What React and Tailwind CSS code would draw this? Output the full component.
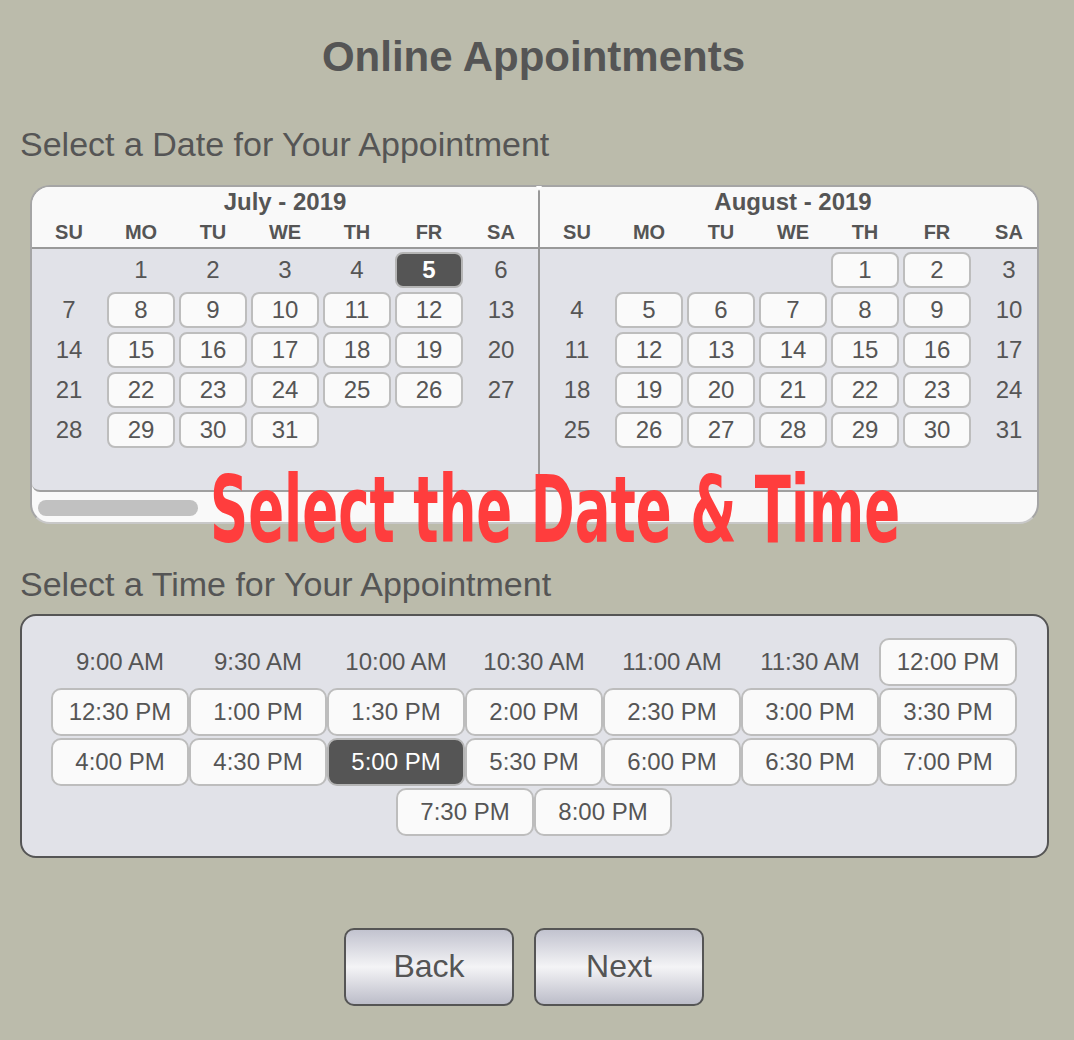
const font = { fontFamily: '"Liberation Sans", Arial, sans-serif' };

const weekDays = ["SU", "MO", "TU", "WE", "TH", "FR", "SA"];

const months = [
  { title: "July - 2019", offset: 1, days: 31, open: [8, 9, 10, 11, 12, 15, 16, 17, 18, 19, 22, 23, 24, 25, 26, 29, 30, 31], selected: 5 },
  { title: "August - 2019", offset: 4, days: 31, open: [1, 2, 5, 6, 7, 8, 9, 12, 13, 14, 15, 16, 19, 20, 21, 22, 23, 26, 27, 28, 29, 30] },
];

const times = [
  ["9:00 AM", false], ["9:30 AM", false], ["10:00 AM", false], ["10:30 AM", false], ["11:00 AM", false], ["11:30 AM", false], ["12:00 PM", true],
  ["12:30 PM", true], ["1:00 PM", true], ["1:30 PM", true], ["2:00 PM", true], ["2:30 PM", true], ["3:00 PM", true], ["3:30 PM", true],
  ["4:00 PM", true], ["4:30 PM", true], ["5:00 PM", "selected"], ["5:30 PM", true], ["6:00 PM", true], ["6:30 PM", true], ["7:00 PM", true],
  ["7:30 PM", true], ["8:00 PM", true],
];

function Day({ day, month }) {
  if (!day) return <div className="h-10" />;
  const isSelected = month.selected === day;
  const isOpen = month.open.includes(day);
  return (
    <div className="h-10 flex items-center justify-center">
      {isSelected ? (
        <div className="w-[68px] h-9 rounded-lg border-2 border-[#b5b5b5] bg-[#555555] text-white font-bold flex items-center justify-center">{day}</div>
      ) : isOpen ? (
        <div className="w-[68px] h-9 rounded-lg border-2 border-[#bdbdbd] bg-[#fafafa] flex items-center justify-center">{day}</div>
      ) : (
        <span>{day}</span>
      )}
    </div>
  );
}

function Month({ month, first }) {
  const cells = [];
  for (let i = 0; i < month.offset; i++) cells.push(null);
  for (let d = 1; d <= month.days; d++) cells.push(d);

  return (
    <div className={first ? "w-[508px] shrink-0" : "w-[505px] shrink-0"}>
      <div className={"h-[62px] pl-px border-b-2 border-[#999999] bg-[#f9f9f9] " + (first ? "pr-px border-r-2" : "")}>
        <div className="text-center text-[24px] leading-[30px] font-bold">{month.title}</div>
        <div className="grid grid-cols-[repeat(7,72px)] text-center text-[20px] leading-[30px] font-bold">
          {weekDays.map((w) => (
            <div key={w}>{w}</div>
          ))}
        </div>
      </div>
      <div className={"h-[243px] pl-px pt-px bg-[#e1e2e8] border-b-2 border-[#a0a0a0] " + (first ? "pr-px border-r-2 border-r-[#999999] rounded-b-lg" : "rounded-bl-lg")}>
        <div className="grid grid-cols-[repeat(7,72px)] text-center text-[24px]">
          {cells.map((d, i) => (
            <Day key={i} day={d} month={month} />
          ))}
        </div>
      </div>
    </div>
  );
}

function TimeSlot({ label, state }) {
  if (state === "selected") {
    return <div className="w-[138px] h-[48px] rounded-[10px] border-2 border-[#b5b5b5] bg-[#555555] text-white flex items-center justify-center">{label}</div>;
  }
  if (state) {
    return <div className="w-[138px] h-[48px] rounded-[10px] border-2 border-[#bdbdbd] bg-[#fafafa] flex items-center justify-center">{label}</div>;
  }
  return <div className="w-[138px] h-[48px] flex items-center justify-center">{label}</div>;
}

function NavButton({ children }) {
  return (
    <div className="w-[170px] h-[78px] pb-[2px] rounded-[10px] border-2 border-[#555555] bg-linear-to-b from-[#c2c3cf] via-[#f4f4f6] to-[#bcbdc9] text-[32px] flex items-center justify-center">
      {children}
    </div>
  );
}

export default function App() {
  return (
    <div className="relative w-[1074px] h-[1040px] overflow-hidden bg-[#bbbbab] text-[#555555] px-5 pt-[30px]" style={font}>
      <h1 className="pr-[7px] text-center text-[42px] leading-[54px] font-bold">Online Appointments</h1>

      <h2 className="mt-[40px] text-[34px] leading-[40px]">Select a Date for Your Appointment</h2>

      <div className="mt-[21px] ml-[10px] w-[1009px] h-[339px] rounded-[20px] border-2 border-[#a5a5a5] border-b-[#c8c8c8] bg-[#f9f9f9] overflow-hidden">
        <div className="flex">
          {months.map((m, i) => (
            <Month key={m.title} month={m} first={i === 0} />
          ))}
        </div>
        <div className="mt-2 ml-[6px] w-[160px] h-4 rounded-lg bg-[#c1c1c1]" />
      </div>

      <h2 className="mt-[40px] text-[34px] leading-[40px]">Select a Time for Your Appointment</h2>

      <div className="mt-[10px] w-[1029px] h-[244px] rounded-[16px] border-2 border-[#555555] bg-[#e1e2e8] pt-[22px] pl-[29px] pr-[30px]">
        <div className="flex flex-wrap justify-center gap-y-[2px] text-[24px]">
          {times.map(([label, state]) => (
            <TimeSlot key={label} label={label} state={state} />
          ))}
        </div>
      </div>

      <div className="mt-[70px] mr-[26px] flex justify-center gap-5">
        <NavButton>Back</NavButton>
        <NavButton>Next</NavButton>
      </div>

      <div className="absolute left-[536px] top-[186px] w-0 h-0 border-x-[3px] border-t-[5px] border-x-transparent border-t-white" />

      <div
        className="absolute left-[210px] top-[461px] w-max origin-left text-[#ff3d3d] text-[92px] leading-[100px] font-bold whitespace-nowrap scale-x-[0.64]"
        style={{ fontFamily: '"DejaVu Sans Condensed", "DejaVu Sans", sans-serif' }}
      >
        Select the Date &amp; Time
      </div>
    </div>
  );
}
